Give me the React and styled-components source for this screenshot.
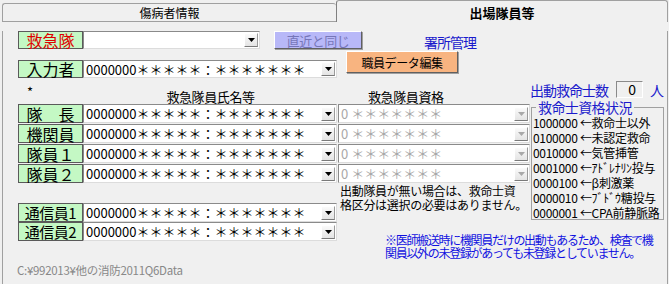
import styled, { createGlobalStyle } from "styled-components";

const Global = createGlobalStyle`
  html, body { margin: 0; padding: 0; background: #f0f0f0; }
  body {
    font-family: "Noto Sans CJK JP", "Noto Sans", sans-serif;
    font-size: 12px;
    color: #000;
  }
`;

const Screen = styled.div`
  width: 669px;
  height: 284px;
  overflow: hidden;
  background: #f0f0f0;
`;

const TabBar = styled.div`
  display: flex;
  height: 22px;
  padding-left: 2px;
`;

const Tab = styled.div`
  box-sizing: border-box;
  width: ${(p) => p.$w}px;
  display: flex;
  align-items: center;
  justify-content: center;
  font-size: ${(p) => (p.$active ? 13 : 12)}px;
  font-weight: ${(p) => (p.$active ? 700 : 400)};
  margin-top: ${(p) => (p.$active ? 0 : 3)}px;
  height: ${(p) => (p.$active ? 22 : 19)}px;
  border-top: 1px solid #a0a0a0;
  border-left: 1px solid ${(p) => (p.$active ? "#808080" : "#a0a0a0")};
  border-right: ${(p) => (p.$active ? "1px solid #a0a0a0" : "none")};
  border-bottom: ${(p) => (p.$active ? "none" : "1px solid #a0a0a0")};
  border-radius: 3px 3px 0 0;
  background: #f0f0f0;
  padding-top: ${(p) => (p.$active ? 1 : 0)}px;
`;

const Panel = styled.div`
  box-sizing: border-box;
  margin-left: 2px;
  width: 666px;
  height: 262px;
  border-left: 1px solid #a0a0a0;
  border-right: 1px solid #a0a0a0;
  border-bottom: 2px solid #808080;
  padding-left: 15px;
`;

const TopRow = styled.div`
  display: flex;
  align-items: flex-start;
  height: ${(p) => p.$h}px;
  margin-top: ${(p) => p.$mt}px;
`;

const Field = styled.div`
  display: flex;
  margin-top: ${(p) => p.$mt || 0}px;
`;

const Label = styled.div`
  box-sizing: border-box;
  width: 65px;
  height: ${(p) => p.$h || 19}px;
  background: #c4f8c4;
  border: 1px solid #5a5a5a;
  color: ${(p) => (p.$red ? "#e00000" : "#000")};
  font-size: ${(p) => p.$fs || 16}px;
  line-height: 1;
  display: flex;
  align-items: center;
  justify-content: center;
  white-space: pre;
  letter-spacing: ${(p) => p.$ls || 0}px;
`;

const Combo = styled.div`
  box-sizing: border-box;
  width: ${(p) => p.$w}px;
  height: ${(p) => p.$h || 19}px;
  margin-left: ${(p) => p.$ml || 0}px;
  background: #fff;
  border: 1px solid;
  border-color: #8a8a8a #dcdcdc #dcdcdc #8a8a8a;
  display: flex;
  align-items: center;
  padding-left: 2px;
  font-size: 13px;
  color: ${(p) => (p.$off ? "#a8a8a8" : "#000")};
  white-space: nowrap;
`;

const ComboText = styled.span`
  flex: 1;
  min-width: 0;
  line-height: 15px;
`;

const ArrowBtn = styled.div`
  box-sizing: border-box;
  flex: none;
  width: 14px;
  height: 14px;
  margin-right: 1px;
  background: linear-gradient(#fafafa, #e4e4e4);
  border: 1px solid;
  border-color: #ffffff #9a9a9a #7a7a7a #ffffff;
  display: flex;
  align-items: center;
  justify-content: center;
`;

const Arrow = ({ off }) => (
  <ArrowBtn>
    <svg width="7" height="4" viewBox="0 0 7 4">
      <path d="M0 0h7L3.5 4z" fill={off ? "#a8a8a8" : "#000"} />
    </svg>
  </ArrowBtn>
);

const Button = styled.div`
  box-sizing: border-box;
  width: ${(p) => p.$w}px;
  height: ${(p) => p.$h}px;
  margin-left: ${(p) => p.$ml}px;
  background: ${(p) => p.$bg};
  color: ${(p) => p.$fg};
  font-size: ${(p) => p.$fs}px;
  letter-spacing: ${(p) => p.$ls}px;
  border: 1px solid;
  border-color: #ffffff #606060 #606060 #ffffff;
  box-shadow: 1px 1px 0 #a0a0a0;
  display: flex;
  align-items: center;
  justify-content: center;
`;

const BlueText = styled.div`
  color: #1a1acc;
  font-size: 14px;
  letter-spacing: -1px;
  margin-left: ${(p) => p.$ml || 0}px;
  margin-top: ${(p) => p.$mt || 0}px;
`;

const MainGrid = styled.div`
  display: grid;
  grid-template-columns: 65px 255px 193px 133px;
  grid-template-rows: 11px 14px repeat(4, 20px) 19px 19px 19px auto;
`;

const Star = styled.div`
  grid-column: 1;
  grid-row: 1 / 3;
  padding: 3px 0 0 9px;
  font-size: 13px;
`;

const Head = styled.div`
  grid-column: ${(p) => p.$col};
  grid-row: 2;
  font-size: 13px;
  line-height: 14px;
  letter-spacing: -0.4px;
  text-align: ${(p) => (p.$pl ? "left" : "center")};
  padding-left: ${(p) => p.$pl || 0}px;
`;

const CountRow = styled.div`
  grid-column: 4;
  grid-row: 1 / 3;
  display: flex;
  align-items: center;
  height: 17px;
  margin: 2px 0 0 -1px;
`;

const CountBox = styled.div`
  box-sizing: border-box;
  width: 27px;
  height: 17px;
  margin: 0 7px 0 8px;
  border: 1px solid;
  border-color: #8a8a8a #ffffff #ffffff #8a8a8a;
  font-size: 14px;
  line-height: 15px;
  text-align: right;
  padding-right: 6px;
`;

const PersonRow = styled.div`
  grid-column: ${(p) => p.$cols};
  grid-row: ${(p) => p.$row};
  display: flex;
`;

const Legendbox = styled.fieldset`
  grid-column: 4;
  grid-row: 2 / 9;
  align-self: start;
  box-sizing: border-box;
  margin: 11px 0 0 0;
  height: 119px;
  padding: 1px 0 0 1px;
  border: 1px solid #a0a0a0;
  min-width: 0;
`;

const Legend = styled.legend`
  color: #1a1acc;
  font-size: 14px;
  line-height: 13px;
  letter-spacing: -0.6px;
  padding: 0 2px;
  margin-left: 3px;
`;

const QualItem = styled.div`
  font-size: 12px;
  line-height: 15px;
  white-space: pre;
  letter-spacing: -0.3px;
`;

const Note = styled.div`
  grid-column: 3;
  grid-row: 7 / 9;
  padding-left: 2px;
  font-size: 12px;
  line-height: 14px;
  letter-spacing: -0.3px;
`;

const BlueNote = styled.div`
  grid-column: 3 / 5;
  grid-row: 9 / 11;
  margin: 11px 0 0 47px;
  color: #1010e0;
  font-size: 12px;
  line-height: 13px;
  letter-spacing: -1.3px;
`;

const Path = styled.div`
  margin: 3px 0 0 -1px;
  color: #888;
  font-size: 11.5px;
  letter-spacing: -0.3px;
`;

const NAME = "0000000＊＊＊＊＊：＊＊＊＊＊＊＊";
const QUAL = "0 ＊＊＊＊＊＊＊";

const crew = ["隊　長", "機関員", "隊員１", "隊員２"];

const quals = [
  "1000000 ←救命士以外",
  "0100000 ←未認定救命",
  "0010000 ←気管挿管",
  "0001000 ←ｱﾄﾞﾚﾅﾘﾝ投与",
  "0000100 ←β刺激薬",
  "0000010 ←ﾌﾞﾄﾞｳ糖投与",
  "0000001 ←CPA前静脈路",
];

const NameCombo = ({ w = 254, h }) => (
  <Combo $w={w} $h={h}>
    <ComboText>{NAME}</ComboText>
    <Arrow />
  </Combo>
);

export default function App() {
  return (
    <Screen>
      <Global />
      <TabBar>
        <Tab $w={334}>傷病者情報</Tab>
        <Tab $w={332} $active>
          出場隊員等
        </Tab>
      </TabBar>
      <Panel>
        <TopRow $h={19} $mt={9}>
          <Label $red $h={18}>救急隊</Label>
          <Combo $w={177} $h={18}>
            <ComboText />
            <Arrow />
          </Combo>
          <Button $w={88} $h={18} $ml={14} $bg="#b8b8f8" $fg="#7676b8" $fs={13} $ls={-0.5}>
            直近と同じ
          </Button>
          <BlueText $ml={62} $mt={1}>署所管理</BlueText>
        </TopRow>
        <TopRow $h={28} $mt={1}>
          <Field $mt={9}>
            <Label $h={18}>入力者</Label>
            <NameCombo h={18} />
          </Field>
          <Button $w={112} $h={22} $ml={9} $bg="#f8b480" $fg="#000" $fs={12} $ls={-0.4}>
            職員データ編集
          </Button>
        </TopRow>
        <MainGrid>
          <Star>*</Star>
          <Head $col={2}>救急隊員氏名等</Head>
          <Head $col={3} $pl={30}>救急隊員資格</Head>
          <CountRow>
            <BlueText>出動救命士数</BlueText>
            <CountBox>0</CountBox>
            <BlueText>人</BlueText>
          </CountRow>
          {crew.map((label, i) => (
            <PersonRow key={label} $cols="1 / 4" $row={3 + i}>
              <Label>{label}</Label>
              <NameCombo />
              <Combo $w={192} $ml={1} $off>
                <ComboText>{QUAL}</ComboText>
                <Arrow off />
              </Combo>
            </PersonRow>
          ))}
          <Legendbox>
            <Legend>救命士資格状況</Legend>
            {quals.map((q) => (
              <QualItem key={q}>{q}</QualItem>
            ))}
          </Legendbox>
          <Note>
            出動隊員が無い場合は、救命士資
            <br />
            格区分は選択の必要はありません。
          </Note>
          <PersonRow $cols="1 / 3" $row={8}>
            <Label $fs={15} $ls={-0.5}>通信員1</Label>
            <NameCombo />
          </PersonRow>
          <PersonRow $cols="1 / 3" $row={9}>
            <Label $fs={15} $ls={-0.5}>通信員2</Label>
            <NameCombo />
          </PersonRow>
          <BlueNote>
            ※医師搬送時に機関員だけの出動もあるため、検査で機
            <br />
            関員以外の未登録があっても未登録としていません。
          </BlueNote>
        </MainGrid>
        <Path>C:¥992013¥他の消防2011Q6Data</Path>
      </Panel>
    </Screen>
  );
}
